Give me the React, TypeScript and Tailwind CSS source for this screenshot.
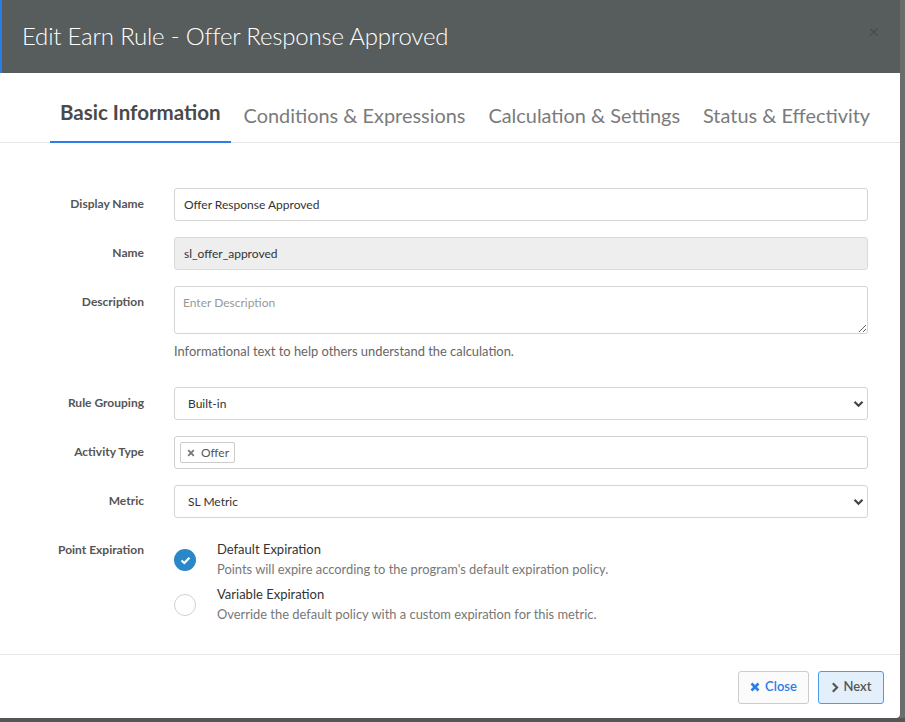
import React, { useState } from "react";

const font = { fontFamily: "Lato, 'Open Sans', sans-serif" };

function Chevron() {
    return (
        <svg width="11" height="8" viewBox="0 0 11 8" className="pointer-events-none absolute right-[4px] top-1/2 -translate-y-1/2">
            <path d="M1.5 1.8 L5.5 5.8 L9.5 1.8" fill="none" stroke="#444" strokeWidth="2.2" />
        </svg>
    );
}

function Label({ children }: { children: React.ReactNode }) {
    return <div className="text-right text-[12px] font-bold text-[#555] leading-[14px] pt-[9px]">{children}</div>;
}

export default function App() {
    const [expiration, setExpiration] = useState("default");
    const tabs = ["Basic Information", "Conditions & Expressions", "Calculation & Settings", "Status & Effectivity"];

    return (
        <div style={font} className="w-[905px] h-[722px] bg-[#555] overflow-hidden">
            <div className="flex h-[718px]">
                <div className="w-[900px] h-[718px] bg-white flex flex-col rounded-br-[4px]">
                    {/* header */}
                    <div className="h-[73px] bg-[#575c5c] border-l-2 border-[#2b7de9] flex items-center justify-between pl-[20px] pr-[21px]">
                        <h1 className="text-[24px] font-light text-white tracking-[-0.2px] pb-[1px]">Edit Earn Rule - Offer Response Approved</h1>
                        <span className="text-[18px] leading-none text-[#474b4b] mb-[12px]">×</span>
                    </div>

                    {/* tabs */}
                    <div className="flex gap-[3px] pl-[50px] h-[70px] border-b border-[#e6e6e6] items-end">
                        {tabs.map((t, i) => (
                            <div
                                key={t}
                                className={
                                    i === 0
                                        ? "px-[10px] pb-[17px] border-b-2 border-[#2b7de9] text-[20.5px] font-bold text-[#4a4a4a] leading-[24px] -mb-px"
                                        : "px-[10px] pb-[15px] text-[19.9px] text-[#7b7b7b] leading-[24px]"
                                }
                            >
                                {t}
                            </div>
                        ))}
                    </div>

                    {/* body */}
                    <div className="flex-1 pr-[32px] pt-[45px]">
                        <div className="grid grid-cols-[144px_1fr] gap-x-[30px]">
                            <Label>Display Name</Label>
                            <input
                                readOnly
                                value="Offer Response Approved"
                                className="h-[33px] border border-[#d5d5d5] rounded-[3px] px-[9px] text-[12px] text-[#333] outline-none"
                            />

                            <div className="mt-[16px]"><Label>Name</Label></div>
                            <input
                                readOnly
                                value="sl_offer_approved"
                                className="mt-[16px] h-[33px] border border-[#d9d9d9] bg-[#eee] rounded-[3px] px-[9px] text-[12px] text-[#333] outline-none"
                            />

                            <div className="mt-[16px]"><Label>Description</Label></div>
                            <div className="mt-[16px] flex flex-col">
                                <textarea
                                    placeholder="Enter Description"
                                    className="h-[48px] border border-[#d5d5d5] rounded-[3px] px-[8px] pt-[7px] text-[12px] text-[#333] placeholder:text-[#999] outline-none"
                                />
                                <p className="mt-[9px] text-[12.9px] leading-[16px] text-[#666]">Informational text to help others understand the calculation.</p>
                            </div>

                            <div className="mt-[28px]"><Label>Rule Grouping</Label></div>
                            <div className="mt-[28px] relative">
                                <div className="h-[33px] border border-[#d5d5d5] rounded-[3px] pl-[13px] flex items-center text-[12px] text-[#333]">Built-in</div>
                                <Chevron />
                            </div>

                            <div className="mt-[16px]"><Label>Activity Type</Label></div>
                            <div className="mt-[16px] h-[33px] border border-[#d0d0d0] rounded-[3px] pl-[5px] flex items-center">
                                <span className="h-[21px] border border-[#ccc] rounded-[2px] pl-[6px] pr-[5px] flex items-center gap-[6px] text-[12px] text-[#555]">
                                    <svg width="8" height="8" viewBox="0 0 8 8">
                                        <path d="M1.2 1.2 L6.8 6.8 M6.8 1.2 L1.2 6.8" stroke="#777" strokeWidth="1.8" />
                                    </svg>
                                    Offer
                                </span>
                            </div>

                            <div className="mt-[16px]"><Label>Metric</Label></div>
                            <div className="mt-[16px] relative">
                                <div className="h-[33px] border border-[#d5d5d5] rounded-[3px] pl-[13px] flex items-center text-[12px] text-[#333]">SL Metric</div>
                                <Chevron />
                            </div>

                            <div className="mt-[24px] text-right text-[12px] font-bold text-[#555] leading-[14px] pt-[1px]">Point Expiration</div>
                            <div className="mt-[21px] flex flex-col gap-[5px]">
                                {[
                                    { id: "default", title: "Default Expiration", desc: "Points will expire according to the program's default expiration policy." },
                                    { id: "variable", title: "Variable Expiration", desc: "Override the default policy with a custom expiration for this metric." },
                                ].map((o) => (
                                    <div key={o.id} className="flex gap-[21px] cursor-pointer" onClick={() => setExpiration(o.id)}>
                                        {expiration === o.id ? (
                                            <span className="mt-[10px] w-[22px] h-[22px] rounded-full bg-[#2b88c8] flex items-center justify-center shrink-0">
                                                <svg width="11" height="9" viewBox="0 0 11 9">
                                                    <path d="M1.5 4.5 L4.3 7 L9.5 1.8" fill="none" stroke="white" strokeWidth="2.2" />
                                                </svg>
                                            </span>
                                        ) : (
                                            <span className="mt-[10px] w-[22px] h-[22px] rounded-full border border-[#d2d2cc] bg-white shrink-0" />
                                        )}
                                        <div className="flex flex-col">
                                            <span className="text-[13px] leading-[20px] text-[#333]">{o.title}</span>
                                            <span className="text-[12.9px] leading-[20px] text-[#777]">{o.desc}</span>
                                        </div>
                                    </div>
                                ))}
                            </div>
                        </div>
                    </div>

                    {/* footer */}
                    <div className="h-[64px] border-t border-[#e6e6e6] flex items-center justify-end gap-[9px] pr-[16px] pt-[1px]">
                        <button className="h-[33px] w-[71px] border border-[#ccc] rounded-[3px] bg-[#fbfbfb] flex items-center justify-center gap-[5px] text-[13px] font-semibold text-[#2b7de9]">
                            <svg width="10" height="10" viewBox="0 0 10 10">
                                <path d="M1.5 1.5 L8.5 8.5 M8.5 1.5 L1.5 8.5" stroke="#2b7de9" strokeWidth="2.6" />
                            </svg>
                            Close
                        </button>
                        <button className="h-[33px] w-[66px] border border-[#4a9af0] rounded-[3px] bg-[#e3f0fc] flex items-center justify-center gap-[5px] text-[13px] font-semibold text-[#555]">
                            <svg width="8" height="11" viewBox="0 0 8 11">
                                <path d="M1.8 1.3 L6 5.5 L1.8 9.7" fill="none" stroke="#555" strokeWidth="2.2" />
                            </svg>
                            Next
                        </button>
                    </div>
                </div>
                <div className="w-[5px] h-full bg-[#6c6c6c]" />
            </div>
        </div>
    );
}
